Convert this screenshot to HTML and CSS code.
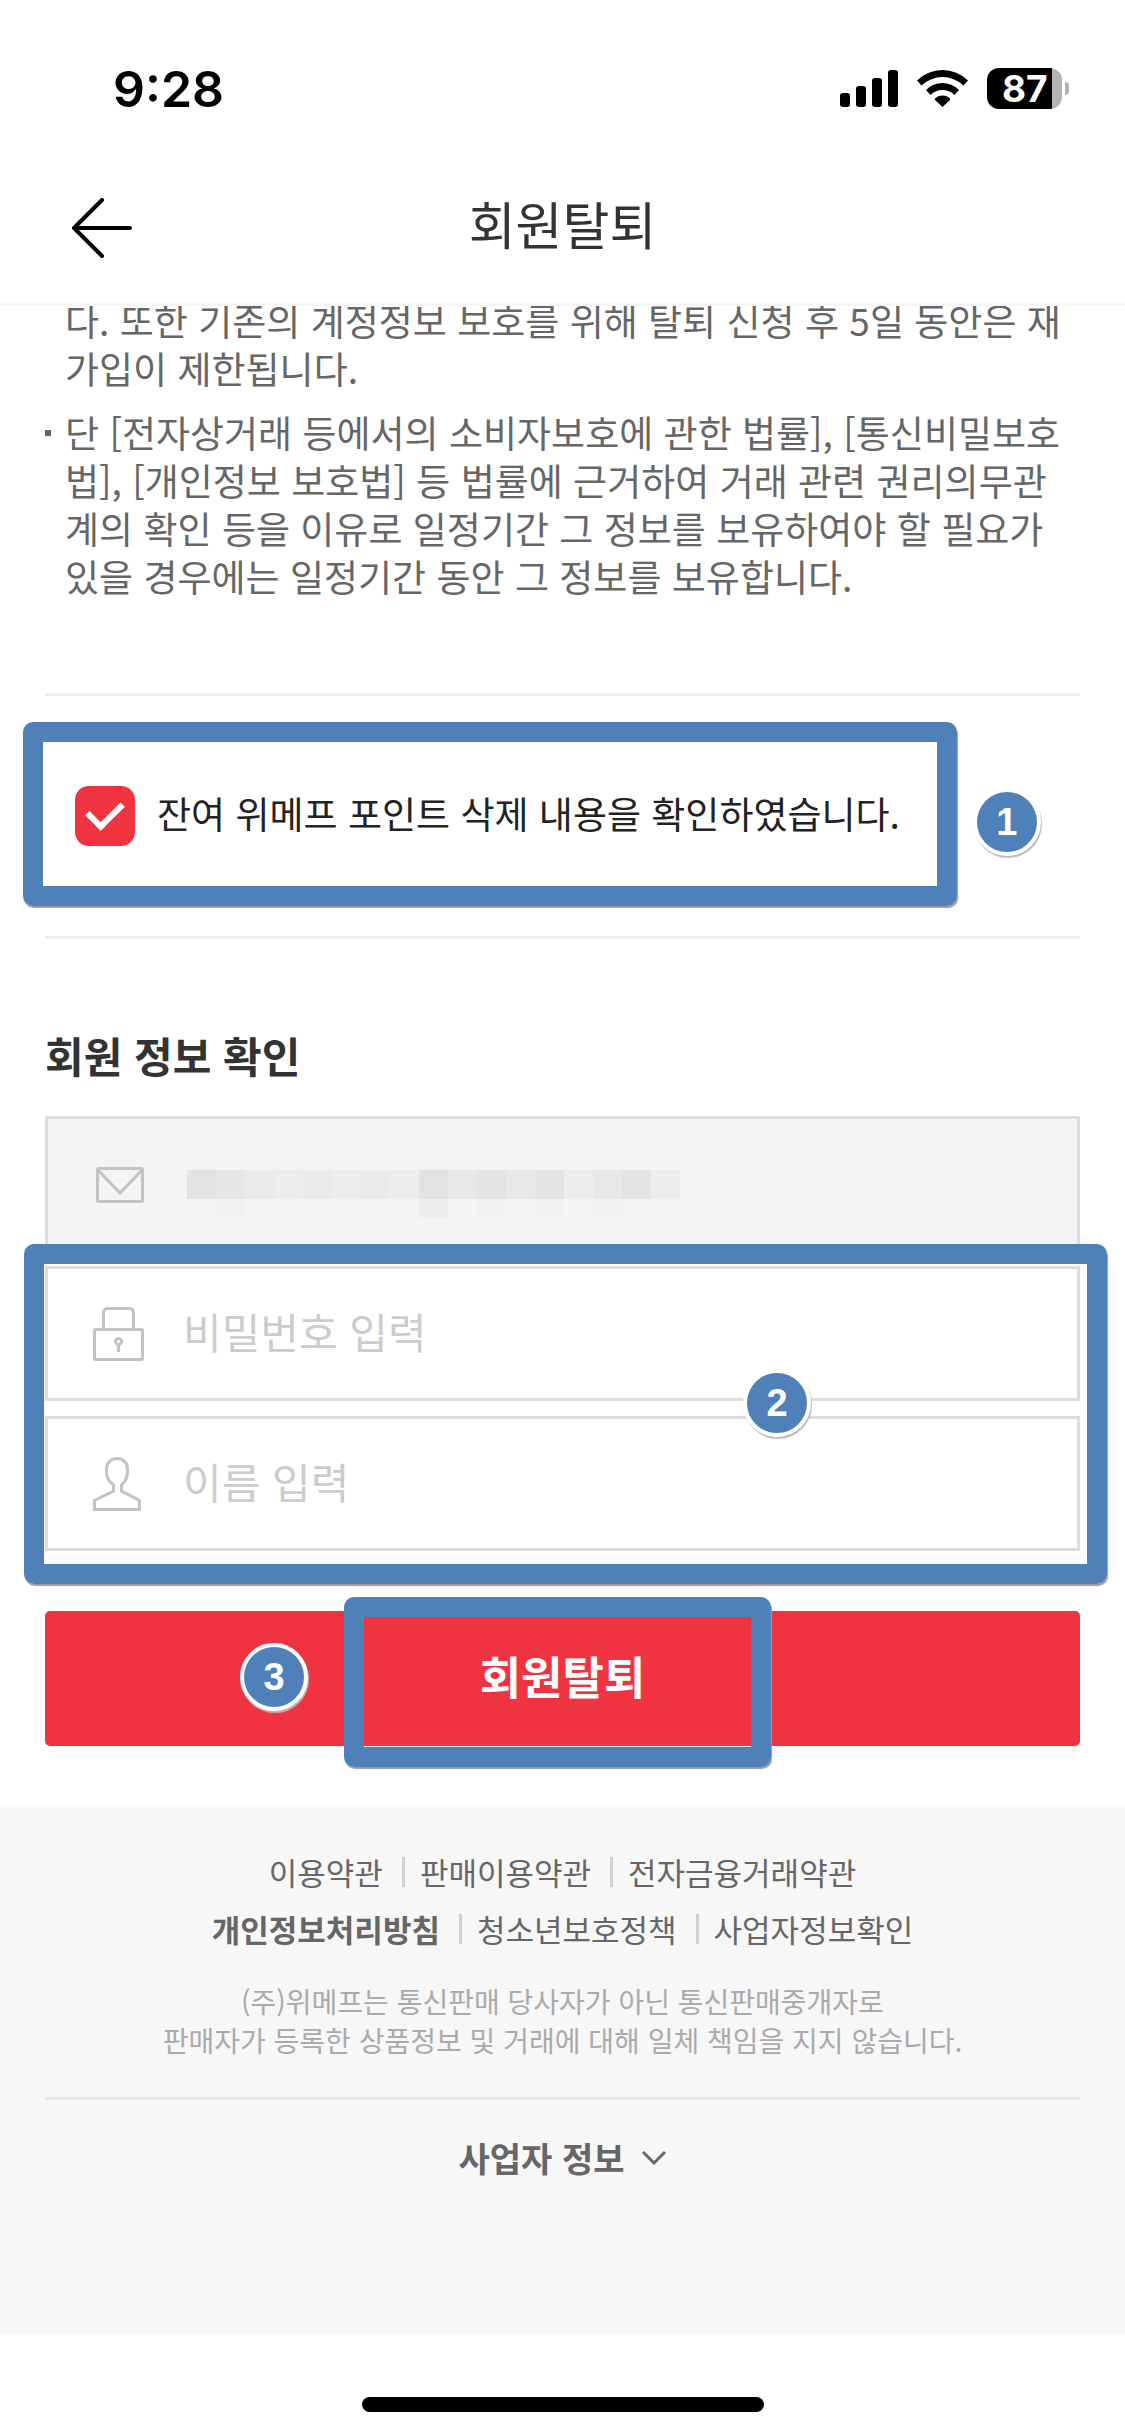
FILE: index.html
```html
<!DOCTYPE html>
<html lang="ko">
<head>
<meta charset="utf-8">
<meta name="viewport" content="width=device-width, initial-scale=1">
<title>회원탈퇴</title>
<link rel="stylesheet" href="styles.css">
</head>
<body>
<div class="status-bar">
  <span class="clock">9:28</span>
  <div class="status-icons">
    <svg width="58" height="37" viewBox="0 0 58 37" aria-hidden="true">
      <rect x="0" y="23" width="10" height="14" rx="3"/>
      <rect x="16" y="16" width="10" height="21" rx="3"/>
      <rect x="32" y="8" width="10" height="29" rx="3"/>
      <rect x="48" y="0" width="10" height="37" rx="3"/>
    </svg>
    <svg width="51" height="37" viewBox="0 0 51 37" aria-hidden="true">
      <path d="M0 10.5Q11 0 25.500 0T51 10.500L46.500 15.500Q37 7 25.500 7T4.500 15.500Z"/>
      <path d="M9 20Q16 13 25.500 13T42 20L37.500 25Q32.500 20 25.500 20T13.500 25Z"/>
      <path d="M18 28.500Q21 25.500 25.500 25.500T33 28.500V30L25.500 37L18 30Z"/>
    </svg>
    <div class="battery"><span class="battery-body">87</span><span class="battery-cap"></span></div>
  </div>
</div>

<header class="header">
  <a class="back" href="#" aria-label="뒤로">
    <svg width="60" height="60" viewBox="0 0 60 60" aria-hidden="true"><path d="M30 2L2 30L30 58M2 30H58" fill="none" stroke="#000" stroke-width="4" stroke-linecap="round" stroke-linejoin="round"/></svg>
  </a>
  <h1 class="title">회원탈퇴</h1>
</header>

<main class="content">
  <div class="notice">
    <ul class="notice-list">
      <li class="notice-item">다. 또한 기존의 계정정보 보호를 위해 탈퇴 신청 후 5일 동안은 재<br>가입이 제한됩니다.</li>
      <li class="notice-item bulleted">단 [전자상거래 등에서의 소비자보호에 관한 법률], [통신비밀보호<br>법], [개인정보 보호법] 등 법률에 근거하여 거래 관련 권리의무관<br>계의 확인 등을 이유로 일정기간 그 정보를 보유하여야 할 필요가<br>있을 경우에는 일정기간 동안 그 정보를 보유합니다.</li>
    </ul>
  </div>

  <div class="confirm">
    <div class="confirm-row">
      <label class="confirm-label"><input class="check" type="checkbox" checked><span class="confirm-text">잔여 위메프 포인트 삭제 내용을 확인하였습니다.</span></label>
      <div class="marker marker-confirm"></div>
      <span class="badge badge-confirm">1</span>
    </div>
  </div>

  <form class="form">
    <h2 class="form-title">회원 정보 확인</h2>
    <div class="field field-readonly">
      <label class="field-icon" for="email" aria-label="이메일">
        <svg width="51" height="54" viewBox="0 0 51 54" aria-hidden="true"><g fill="none" stroke="#c3c3c3" stroke-width="3"><rect x="4.500" y="11.500" width="45" height="33" rx="1"/><path d="M5 13L27 36L49 13"/></g></svg>
      </label>
      <input class="field-input" id="email" type="email" readonly>
      <svg class="mosaic" width="493" height="77" viewBox="0 0 493 77" aria-hidden="true" shape-rendering="crispEdges">
        <path fill="#f3f3f3" d="M0 0H29V29H0ZM58 0H261V29H58Z"/>
        <path fill="#e3e3e3" d="M0 29h29v29h-29zM232 29h29v29h-29z"/>
        <path fill="#e6e6e6" d="M29 29h29v29h-29z"/>
        <path fill="#eaeaea" d="M58 29h29v29h-29zM116 29h29v29h-29zM174 29h29v29h-29z"/>
        <path fill="#ededed" d="M87 29h29v29h-29zM145 29h29v29h-29zM203 29h29v29h-29zM377 29h29v29h-29zM464 29h29v29h-29z"/>
        <path fill="#e8e8e8" d="M261 29h29v29h-29zM319 29h29v29h-29zM406 29h29v29h-29z"/>
        <path fill="#e4e4e4" d="M290 29h29v29h-29zM348 29h29v29h-29zM435 29h29v29h-29z"/>
        <path fill="#f2f2f2" d="M29 58h29v19h-29zM290 58h29v19h-29zM348 58h29v19h-29zM406 58h29v19h-29z"/>
        <path fill="#eee" d="M232 58h29v19h-29z"/>
      </svg>
    </div>
    <div class="credentials">
      <div class="field">
        <label class="field-icon" for="password" aria-label="비밀번호">
          <svg width="51" height="54" viewBox="0 0 51 54" aria-hidden="true"><g fill="none" stroke="#c3c3c3" stroke-width="3"><rect x="1.500" y="22.500" width="48" height="30" rx="1"/><path d="M10.500 22V6Q10.500 1.500 15 1.500H36Q40.500 1.500 40.500 6V22"/><circle cx="25.500" cy="34.500" r="3"/><path d="M25.500 37V45"/></g></svg>
        </label>
        <input class="field-input" id="password" type="password" placeholder="비밀번호 입력">
      </div>
      <div class="field">
        <label class="field-icon" for="name" aria-label="이름">
          <svg width="51" height="54" viewBox="0 0 51 54" aria-hidden="true"><path d="M1.500 52.500V43.500L20.500 34V28C15 24 13.500 20 13.500 15V12C13.500 5.500 18 1.500 24 1.500S34.500 5.500 34.500 12V15C34.500 20 33 24 28.500 28V34L46.500 43.500V52.500Z" fill="none" stroke="#c3c3c3" stroke-width="3"/></svg>
        </label>
        <input class="field-input" id="name" type="text" placeholder="이름 입력">
      </div>
      <div class="marker marker-credentials"></div>
      <span class="badge badge-credentials">2</span>
    </div>
    <div class="submit-row">
      <button class="submit" type="button">회원탈퇴</button>
      <div class="marker marker-submit"></div>
      <span class="badge badge-submit">3</span>
    </div>
  </form>
</main>

<footer class="footer">
  <nav class="links">
    <div class="links-row"><a href="#">이용약관</a><a href="#">판매이용약관</a><a href="#">전자금융거래약관</a></div>
    <div class="links-row"><a class="strong" href="#">개인정보처리방침</a><a href="#">청소년보호정책</a><a href="#">사업자정보확인</a></div>
  </nav>
  <p class="disclaimer">(주)위메프는 통신판매 당사자가 아닌 통신판매중개자로<br>판매자가 등록한 상품정보 및 거래에 대해 일체 책임을 지지 않습니다.</p>
  <div class="company">
    <button class="company-toggle" type="button">사업자 정보
      <svg width="24" height="16" viewBox="0 0 24 16" aria-hidden="true"><path d="M1 2L12 13L23 2" fill="none" stroke="#666" stroke-width="3"/></svg>
    </button>
  </div>
</footer>
<div class="home-area"><div class="home-indicator"></div></div>
</body>
</html>
```
FILE: styles.css
```css
* {
  box-sizing: border-box;
}

body {
  margin: 0;
  background: #fff;
  color: #333;
  font-family: "Noto Sans CJK KR", sans-serif;
}

h1,
h2,
p,
ul {
  margin: 0;
  padding: 0;
}

a {
  color: inherit;
  text-decoration: none;
}

button,
input {
  font-family: inherit;
}

svg {
  display: block;
  flex: none;
}

/* Status bar */
.status-bar {
  display: flex;
  align-items: center;
  justify-content: space-between;
  height: 153px;
  padding: 24px 56px 0 113px;
  color: #000;
}

.clock {
  font: 600 50px/60px Inter, sans-serif;
}

.status-icons {
  display: flex;
  align-items: center;
  gap: 19px;
}

.battery {
  display: flex;
  align-items: center;
  gap: 3px;
}

.battery-body {
  width: 75px;
  height: 41px;
  padding-left: 15px;
  border-radius: 12px;
  background: linear-gradient(to right, #000 65px, #b3b3b3 65px);
  color: #fff;
  font: 700 37px/41px Inter, sans-serif;
}

.battery-cap {
  width: 4px;
  height: 13px;
  border-radius: 0 4px 4px 0;
  background: #b3b3b3;
}

/* Page header */
.header {
  display: grid;
  grid-template-columns: 60px 1fr 60px;
  align-items: center;
  height: 153px;
  padding: 0 72px;
  border-bottom: 3px solid #f5f5f5;
}

.title {
  padding-bottom: 10px;
  font-size: 51px;
  font-weight: 400;
  line-height: 72px;
  text-align: center;
}

.content {
  padding: 0 45px 60px;
}

/* Notice */
.notice {
  height: 387px;
  overflow: hidden;
}

.notice-list {
  display: flex;
  flex-direction: column;
  gap: 16px;
  margin-top: -10px;
  list-style: none;
  color: #666;
  font-size: 37px;
  line-height: 48px;
  white-space: nowrap;
}

.notice-item {
  padding-left: 20px;
}

.bulleted {
  background: linear-gradient(#666, #666) 0 22px / 6px 6px no-repeat;
}

/* Confirmation */
.confirm {
  padding: 87px 30px;
  border-top: 3px solid #eee;
  border-bottom: 3px solid #eee;
}

.confirm-row {
  position: relative;
  width: fit-content;
}

.confirm-label {
  display: flex;
  align-items: center;
  gap: 22px;
  height: 66px;
  color: #222;
  font-size: 37px;
  line-height: 48px;
  white-space: nowrap;
}

.confirm-text {
  padding-bottom: 6px;
}

.check {
  appearance: none;
  flex: none;
  display: grid;
  place-items: center;
  width: 60px;
  height: 60px;
  margin: 0;
  border-radius: 14px;
  background: #f03340;
}

.check::after {
  content: "";
  width: 16px;
  height: 28px;
  margin-bottom: 10px;
  border: solid #fff;
  border-width: 0 6px 6px 0;
  rotate: 45deg;
}

/* Step markers */
.marker {
  position: absolute;
  border: 20px solid #4f81b8;
  border-radius: 10px;
  box-shadow: 1px 2px 1px #999;
  pointer-events: none;
}

.badge {
  position: absolute;
  width: 68px;
  height: 68px;
  border: 4px solid #fff;
  border-radius: 50%;
  background: #4f81b8;
  box-shadow: 1px 2px 1px #bbb;
  color: #fff;
  font: 700 38px/60px "Liberation Sans", sans-serif;
  text-align: center;
}

.marker-confirm {
  inset: -61px -57px -57px -52px;
}

.badge-confirm {
  top: 5px;
  right: -141px;
}

.marker-credentials {
  inset: -22px -27px -33px -21px;
}

.badge-credentials {
  top: 103px;
  right: 269px;
}

.marker-submit {
  inset: -14px 309px -21px 299px;
}

.badge-submit {
  top: 32px;
  left: 195px;
}

/* Member form */
.form-title {
  padding: 84px 0 29px;
  color: #333;
  font-size: 42px;
  font-weight: 700;
  line-height: 64px;
}

.field {
  position: relative;
  display: flex;
  align-items: center;
  gap: 39px;
  height: 135px;
  padding-left: 45px;
  border: 3px solid #ddd;
  background: #fff;
}

.field-readonly {
  margin-bottom: 15px;
  background: #f4f4f4;
}

.field-input {
  flex: 1;
  min-width: 0;
  height: 100%;
  padding: 0 0 6px;
  border: 0;
  outline: 0;
  background: transparent;
  color: #333;
  font-size: 42px;
}

.field-input::placeholder {
  color: #ccc;
}

.mosaic {
  position: absolute;
  top: 22px;
  left: 139px;
}

.credentials {
  position: relative;
  display: flex;
  flex-direction: column;
  gap: 15px;
}

.submit-row {
  position: relative;
  margin-top: 60px;
}

.submit {
  display: block;
  width: 100%;
  height: 135px;
  padding: 0 0 6px;
  border: 0;
  border-radius: 5px;
  background: #f03340;
  color: #fff;
  font-size: 45px;
  font-weight: 700;
}

/* Footer */
.footer {
  height: 528px;
  padding: 37px 45px 0;
  background: #f7f7f7;
  color: #666;
  text-align: center;
}

.links {
  font-size: 31px;
  line-height: 57px;
}

.links-row {
  display: flex;
  justify-content: center;
}

.links-row a {
  display: flex;
  align-items: center;
}

.links-row a + a::before {
  content: "";
  width: 3px;
  height: 30px;
  margin: 0 15px 0 19px;
  background: #d0d0d0;
}

.links-row .strong {
  font-weight: 700;
}

.disclaimer {
  margin-top: 25px;
  color: #aaa;
  font-size: 28px;
  line-height: 39px;
}

.company {
  display: flex;
  justify-content: center;
  margin-top: 37px;
  padding-top: 32px;
  border-top: 3px solid #e7e7e7;
}

.company-toggle {
  display: flex;
  align-items: center;
  gap: 18px;
  padding: 0;
  border: 0;
  background: none;
  color: #666;
  font-size: 34px;
  font-weight: 700;
  line-height: 51px;
}

.home-area {
  display: flex;
  justify-content: center;
  padding: 63px 0 24px;
}

.home-indicator {
  width: 402px;
  height: 15px;
  border-radius: 8px;
  background: #000;
}
```
